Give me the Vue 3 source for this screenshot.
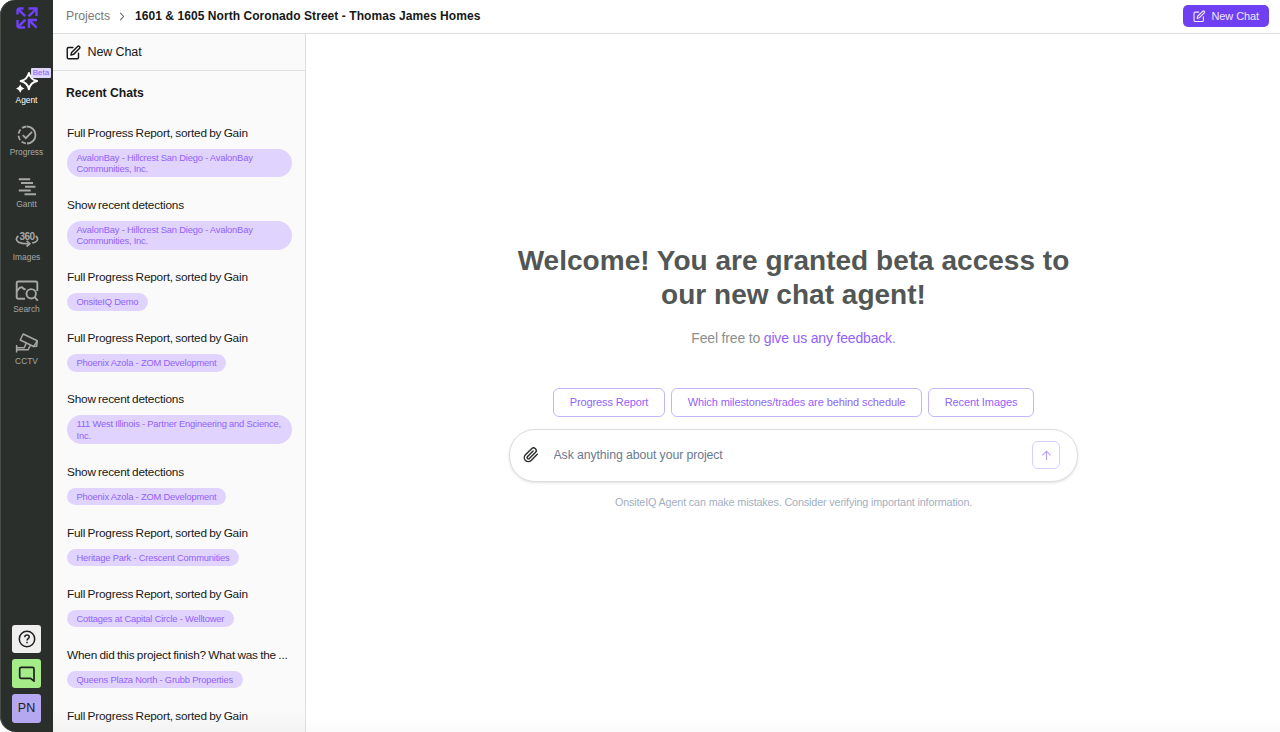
<script setup>
import { ref } from 'vue'

const navItems = [
  { id: 'agent', label: 'Agent', beta: true },
  { id: 'progress', label: 'Progress' },
  { id: 'gantt', label: 'Gantt' },
  { id: 'images', label: 'Images' },
  { id: 'search', label: 'Search' },
  { id: 'cctv', label: 'CCTV' }
]

const activeNav = ref('agent')
const message = ref('')

const chats = [
  { title: 'Full Progress Report, sorted by Gain', project: 'AvalonBay - Hillcrest San Diego - AvalonBay Communities, Inc.' },
  { title: 'Show recent detections', project: 'AvalonBay - Hillcrest San Diego - AvalonBay Communities, Inc.' },
  { title: 'Full Progress Report, sorted by Gain', project: 'OnsiteIQ Demo' },
  { title: 'Full Progress Report, sorted by Gain', project: 'Phoenix Azola - ZOM Development' },
  { title: 'Show recent detections', project: '111 West Illinois - Partner Engineering and Science, Inc.' },
  { title: 'Show recent detections', project: 'Phoenix Azola - ZOM Development' },
  { title: 'Full Progress Report, sorted by Gain', project: 'Heritage Park - Crescent Communities' },
  { title: 'Full Progress Report, sorted by Gain', project: 'Cottages at Capital Circle - Welltower' },
  { title: 'When did this project finish? What was the ...', project: 'Queens Plaza North - Grubb Properties' },
  { title: 'Full Progress Report, sorted by Gain' }
]

const suggestions = ['Progress Report', 'Which milestones/trades are behind schedule', 'Recent Images']
</script>

<template>
  <div class="app">
    <nav class="rail">
      <svg class="logo" viewBox="0 0 22 22" fill="none" stroke="#6f42f5" stroke-width="2.4">
        <path d="M1.5 7.5V3.5a2 2 0 0 1 2-2h4M2.8 2.8l6.4 6.4" />
        <path d="M12.5 1.5h8v7.5M20 2l-7.4 7.4" />
        <path d="M1.5 13v5.5a2 2 0 0 0 2 2H9M9.4 12.6 2.6 19.4" />
        <path d="M13 21v-8h8M13.4 13.4l7.2 7.2" />
      </svg>

      <div class="nav">
        <div
          v-for="item in navItems"
          :key="item.id"
          class="nav-item"
          :class="{ active: item.id === activeNav }"
          @click="activeNav = item.id"
        >
          <svg v-if="item.id === 'agent'" class="nav-icon" viewBox="0 0 24 24" fill="none" stroke="currentColor" stroke-width="2" stroke-linejoin="round">
            <path d="M13.9 1.9q1.5 6.7 8.2 8.2-6.7 1.5-8.2 8.2-1.5-6.7-8.2-8.2 6.700-1.500 8.200-8.200z" />
            <path d="M5.200 13.400q.9 3.300 4.200 4.200-3.300.9-4.200 4.200-.9-3.300-4.200-4.200 3.300-.9 4.200-4.200z" fill="currentColor" stroke="none" />
          </svg>
          <svg v-else-if="item.id === 'progress'" class="nav-icon" viewBox="0 0 24 24" fill="none" stroke="currentColor" stroke-width="1.8">
            <path d="M12 3.500a8.500 8.500 0 0 1 0 17" />
            <path d="M12 20.500a8.500 8.500 0 0 1 0-17" stroke-dasharray="4.6 2.1" stroke-dashoffset="-1.2" />
            <path d="m7.800 12.200 3 3 6.200-6.400" />
          </svg>
          <svg v-else-if="item.id === 'gantt'" class="nav-icon" viewBox="0 0 24 24" fill="none" stroke="currentColor" stroke-width="1.9">
            <path d="M3.800 4.300h11.400M6 8h12M10 11.800h10.500M3.800 15.500h12M9.500 19.300h11.500" />
          </svg>
          <svg v-else-if="item.id === 'images'" class="nav-icon" viewBox="0 0 24 24" fill="none" stroke="currentColor" stroke-width="1.7">
            <text class="deg" x="12" y="12.8" text-anchor="middle">360</text>
            <path d="M3.400 9C.6 10.800.8 13.800 3.600 15.200c2.400 1.200 6 1.700 9.800 1.500M20.600 9c2.800 1.800 2.600 4.800-.2 6-.9.400-2 .7-3.200 1" />
            <path d="m11.600 13.800 3.200 2.900-3.200 2.800" />
          </svg>
          <svg v-else-if="item.id === 'search'" class="nav-icon" viewBox="0 0 24 24" fill="none" stroke="currentColor" stroke-width="1.9">
            <path d="M10 19.800H3.200a1.500 1.500 0 0 1-1.500-1.500V4a1.500 1.500 0 0 1 1.500-1.500h17.600A1.500 1.500 0 0 1 22.300 4v8" />
            <path d="M2 12.500c1.600-3.800 4.400-5.300 6.200-3.200.8 1 1.700 1 2.400.6" />
            <circle cx="16.200" cy="14.800" r="4.700" />
            <path d="m19.600 18.200 3.200 3.400" />
          </svg>
          <svg v-else class="nav-icon" viewBox="0 0 24 24" fill="none" stroke="currentColor" stroke-width="1.5" stroke-linejoin="round">
            <path d="M8.200 3 22.300 9.800l-3.600 5.700L5.200 9z" />
            <path d="m22.300 10-.6 5.200-3.200.4" />
            <path d="M11.200 12.200 9.200 16.800H2M15.400 14.400l-2.400 4.400H2M1.600 14v7.500" />
          </svg>
          <span class="nav-label">{{ item.label }}</span>
          <span v-if="item.beta" class="beta">Beta</span>
        </div>
      </div>

      <div class="rail-bottom">
        <button class="tile help" aria-label="Help">
          <svg viewBox="0 0 18 18" fill="none" stroke="currentColor" stroke-width="1.5">
            <circle cx="9" cy="9" r="7.7" />
            <path d="M6.8 7.2c0-1.4 1-2.2 2.2-2.2s2.2.8 2.2 2c0 1.7-2.2 1.7-2.2 3.5" />
            <path d="M9 11.8v1.5" />
          </svg>
        </button>
        <button class="tile feedback" aria-label="Feedback">
          <svg viewBox="0 0 18 18" fill="none" stroke="currentColor" stroke-width="1.7" stroke-linejoin="round">
            <path d="M3.200 2.400h11.300a1.500 1.500 0 0 1 1.500 1.500v12.300l-3.400-2.800H3.200a1.500 1.500 0 0 1-1.500-1.500v-8a1.500 1.500 0 0 1 1.500-1.500z" />
          </svg>
        </button>
        <button class="tile user">PN</button>
      </div>
    </nav>

    <div class="page">
      <header class="header">
        <span class="crumb">Projects</span>
        <svg class="chevron" viewBox="0 0 6 10" fill="none" stroke="#666" stroke-width="1.2">
          <path d="m1 1 3.800 4L1 9" />
        </svg>
        <h1 class="project-name">1601 &amp; 1605 North Coronado Street - Thomas James Homes</h1>
        <button class="new-chat-btn">
          <svg viewBox="0 0 24 24" fill="none" stroke="currentColor" stroke-width="2.2" stroke-linecap="round" stroke-linejoin="round">
            <path d="M11 4H4a2 2 0 0 0-2 2v14a2 2 0 0 0 2 2h14a2 2 0 0 0 2-2v-7" />
            <path d="M18.500 2.500a2.120 2.120 0 0 1 3 3L12 15l-4 1 1-4z" />
          </svg>
          New Chat
        </button>
      </header>

      <div class="body">
        <aside class="panel">
          <div class="panel-new">
            <svg viewBox="0 0 24 24" fill="none" stroke="currentColor" stroke-width="2.3" stroke-linecap="round" stroke-linejoin="round">
              <path d="M11 4H4a2 2 0 0 0-2 2v14a2 2 0 0 0 2 2h14a2 2 0 0 0 2-2v-7" />
              <path d="M18.500 2.500a2.120 2.120 0 0 1 3 3L12 15l-4 1 1-4z" />
            </svg>
            <span>New Chat</span>
          </div>
          <h2 class="panel-title">Recent Chats</h2>
          <div class="chats">
            <div v-for="(chat, i) in chats" :key="i" class="chat">
              <div class="chat-title">{{ chat.title }}</div>
              <div v-if="chat.project" class="pill">{{ chat.project }}</div>
            </div>
          </div>
        </aside>

        <main class="main">
          <h2 class="welcome">Welcome! You are granted beta access to<br />our new chat agent!</h2>
          <p class="sub">Feel free to <a class="link">give us any feedback</a>.</p>
          <div class="suggestions">
            <button v-for="s in suggestions" :key="s" class="suggestion" @click="message = s">{{ s }}</button>
          </div>
          <div class="composer">
            <svg class="clip" viewBox="0 0 24 24" fill="none" stroke="#2b2f2d" stroke-width="2.2" stroke-linecap="round" stroke-linejoin="round">
              <path d="m21.400 11-9.200 9.200a6 6 0 0 1-8.500-8.500l9.200-9.200a4 4 0 0 1 5.700 5.700l-9.200 9.200a2 2 0 0 1-2.800-2.800l8.500-8.500" />
            </svg>
            <input v-model="message" class="input" placeholder="Ask anything about your project" />
            <button class="send" aria-label="Send">
              <svg viewBox="0 0 12 12" fill="none" stroke="currentColor" stroke-width="1.2">
                <path d="M6 11V1.500M1.500 5.800 6 1.300l4.500 4.500" />
              </svg>
            </button>
          </div>
          <p class="disclaimer">OnsiteIQ Agent can make mistakes. Consider verifying important information.</p>
        </main>
      </div>
    </div>
  </div>
</template>

<style>
body {
  margin: 0;
  background: #fff;
}
</style>

<style scoped>
.app {
  display: flex;
  height: 732px;
  overflow: hidden;
  font-family: "Liberation Sans", Arial, sans-serif;
  color: #161817;
}

.app * {
  box-sizing: border-box;
}

button {
  font-family: inherit;
  padding: 0;
  border: none;
  cursor: pointer;
}

h1,
h2,
p {
  margin: 0;
}

.rail {
  width: 53px;
  flex-shrink: 0;
  display: flex;
  flex-direction: column;
  align-items: center;
  padding: 7px 0 9.5px;
  background: #2b2f2c;
  box-shadow: inset 1px 0 #484c49;
  border-radius: 15px 0 0 16px;
}

.logo {
  width: 22px;
  height: 22px;
}

.nav {
  display: flex;
  flex-direction: column;
  gap: 17.7px;
  margin-top: 41.5px;
}

.nav-item {
  position: relative;
  display: flex;
  flex-direction: column;
  align-items: center;
  gap: 0.5px;
  width: 52px;
  color: #a5a8a6;
  cursor: pointer;
}

.nav-item.active {
  color: #fff;
}

.nav-icon {
  width: 24px;
  height: 24px;
}

.deg {
  font-size: 10px;
  font-weight: 700;
  letter-spacing: -0.5px;
  fill: currentColor;
  stroke: none;
}

.nav-label {
  font-size: 8.4px;
  line-height: 10px;
}

.beta {
  position: absolute;
  top: -2.5px;
  left: 30.5px;
  width: 20px;
  height: 10px;
  border-radius: 1px;
  background: #e0d5ff;
  color: #8a5cf6;
  font-size: 8px;
  line-height: 10px;
  text-align: center;
}

.rail-bottom {
  display: flex;
  flex-direction: column;
  gap: 6.2px;
  margin-top: auto;
}

.tile {
  display: flex;
  align-items: center;
  justify-content: center;
  width: 28.5px;
  height: 28.5px;
  border-radius: 3px;
  color: #1d201e;
}

.tile svg {
  width: 18px;
  height: 18px;
}

.help {
  background: #efefef;
}

.feedback {
  background: #a5ec88;
}

.user {
  background: #b5a8f0;
  font-size: 12.5px;
}

.page {
  flex: 1;
  display: flex;
  flex-direction: column;
  min-width: 0;
}

.header {
  display: flex;
  align-items: center;
  flex-shrink: 0;
  height: 34px;
  padding: 0 11px 1px 13px;
  border-bottom: 1px solid #dfdfdf;
}

.crumb {
  font-size: 12.2px;
  color: #777a78;
}

.chevron {
  width: 6px;
  height: 9px;
  margin: 0 10px 0 9px;
}

.project-name {
  font-size: 12px;
  letter-spacing: 0.06px;
}

.new-chat-btn {
  display: flex;
  align-items: center;
  gap: 6px;
  width: 86px;
  height: 22px;
  margin-left: auto;
  padding-left: 10px;
  border-radius: 5px;
  background: #6f3ff2;
  color: #efe9ff;
  font-size: 11px;
  letter-spacing: -0.1px;
  white-space: nowrap;
}

.new-chat-btn svg {
  width: 12.5px;
  height: 12.5px;
}

.body {
  flex: 1;
  display: flex;
  min-height: 0;
}

.panel {
  width: 253px;
  flex-shrink: 0;
  overflow: hidden;
  background: linear-gradient(#fafafa calc(100% - 22px), #f3f3f3);
  border-right: 1px solid #dfdfdf;
}

.panel-new {
  display: flex;
  align-items: center;
  gap: 6.5px;
  height: 37px;
  padding-left: 13px;
  border-bottom: 1px solid #dfdfdf;
  font-size: 12.5px;
  letter-spacing: -0.1px;
}

.panel-new svg {
  width: 15px;
  height: 15px;
}

.panel-title {
  margin: 13.5px 0 0 13px;
  font-size: 12.2px;
  line-height: 16px;
}

.chats {
  display: flex;
  flex-direction: column;
  gap: 19.5px;
  padding: 24px 13px 0 14px;
}

.chat-title {
  height: 16px;
  font-size: 11.8px;
  line-height: 16px;
  letter-spacing: -0.2px;
  word-spacing: -0.7px;
  white-space: nowrap;
}

.pill {
  width: fit-content;
  margin-top: 8px;
  padding: 3.2px 10px 3.2px 9.5px;
  border-radius: 15px;
  background: #e0d4ff;
  color: #9262fb;
  font-size: 9.4px;
  line-height: 11.2px;
  letter-spacing: -0.21px;
}

.main {
  flex: 1;
  display: flex;
  flex-direction: column;
  align-items: center;
  padding: 209.5px 0 0 1px;
  background: linear-gradient(#fff calc(100% - 14px), #fafafa);
}

.welcome {
  font-size: 28px;
  line-height: 34px;
  letter-spacing: 0.02px;
  text-align: center;
  color: #525755;
}

.sub {
  margin-top: 16.5px;
  font-size: 14px;
  line-height: 20px;
  letter-spacing: -0.17px;
  color: #8c8f8d;
}

.link {
  color: #9262fb;
}

.suggestions {
  display: flex;
  gap: 6px;
  margin-top: 40px;
}

.suggestion {
  height: 28.5px;
  padding: 0 15.7px;
  border: 1px solid #c6b4fb;
  border-radius: 6px;
  background: #fff;
  color: #9262fb;
  font-size: 11px;
  letter-spacing: -0.1px;
}

.composer {
  display: flex;
  align-items: center;
  width: 569px;
  height: 53px;
  margin-top: 12px;
  padding: 0 17px 0 13px;
  border: 1px solid #dedede;
  border-radius: 26px;
  background: #fff;
  box-shadow: 0 1px 3px rgba(0, 0, 0, 0.12);
}

.clip {
  width: 16px;
  height: 16px;
}

.input {
  flex: 1;
  margin-left: 14.5px;
  padding: 0 0 1px;
  border: none;
  outline: none;
  background: transparent;
  font-family: inherit;
  font-size: 12.3px;
  letter-spacing: -0.1px;
}

.input::placeholder {
  color: #6b7a90;
}

.send {
  display: flex;
  align-items: center;
  justify-content: center;
  width: 28px;
  height: 28px;
  border: 1px solid #d9cdfd;
  border-radius: 6px;
  background: #fff;
  color: #b79cfb;
}

.send svg {
  width: 11px;
  height: 11px;
}

.disclaimer {
  margin-top: 12px;
  font-size: 10.8px;
  line-height: 16px;
  letter-spacing: -0.15px;
  color: #a3afc2;
}
</style>
